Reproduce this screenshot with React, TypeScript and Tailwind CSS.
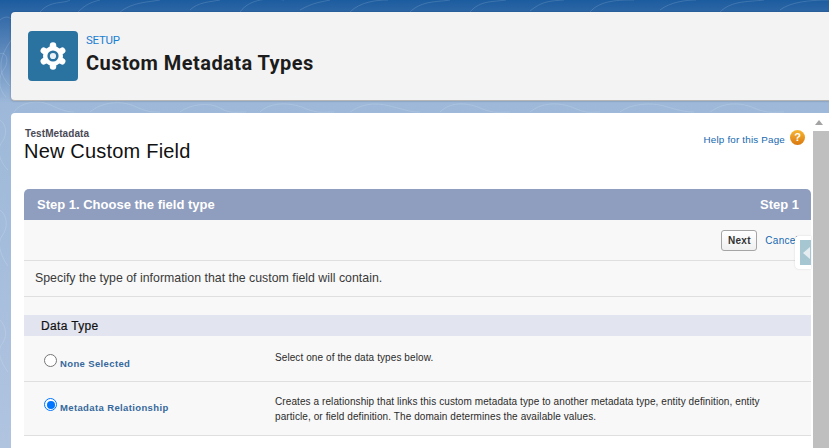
const font = { fontFamily: '"Liberation Sans", Arial, sans-serif' };

function Contours() {
  return (
    <svg className="absolute inset-0 h-full w-full" viewBox="0 0 829 448" fill="none" stroke="#ffffff" strokeOpacity="0.14">
      <path d="M0 20c12-10 20 8 10 22s-14 30 0 44" />
      <path d="M-2 55c8-6 12 6 6 14s-6 20 2 28" />
      <path d="M40 12c10-12 24-8 30-12M78 12c8-8 14-10 22-12M120 12c12-10 30-10 40-12M190 10c8-8 20-8 30-10" />
      <path d="M240 12c10-14 30-14 44-12M300 10c14-8 22-8 30-10M350 12c10-10 26-12 38-12M410 12c12-12 30-10 40-12" />
      <path d="M470 12c10-12 24-10 36-12M530 11c12-10 20-10 34-11M590 12c10-12 30-12 44-12M660 10c10-8 26-10 36-10M720 12c12-12 30-10 44-12M780 10c10-8 30-10 49-10" />
      <path d="M14 112c6-10 24-12 34-8s16 8 26 8M90 112c12-10 30-12 44-6s16 6 26 6M180 112c10-8 30-10 40-4s16 4 26 4" />
      <path d="M260 112c10-10 30-10 44-4s20 4 30 4M350 112c12-8 24-10 40-6s20 6 30 6M440 112c10-10 26-10 40-4s20 4 30 4" />
      <path d="M530 112c12-10 30-10 44-4s16 4 26 4M620 112c10-8 30-10 44-6s20 6 30 6M710 112c14-10 30-10 44-4s20 4 30 4" />
      <path d="M0 120c6 4 8 14 2 22s-2 20 6 28M0 210c8 6 8 18 2 26s0 22 6 30M0 320c6 6 8 16 2 24s0 20 6 28" />
    </svg>
  );
}

function GearIcon() {
  return (
    <svg width="30" height="30" viewBox="-15 -15 30 30">
      <circle r="10" fill="#fff" />
      {[90, 30, -30].map((a) => (
        <g key={a} transform={`rotate(${a})`}>
          <line x1="-10.6" x2="10.6" y1="0" y2="0" stroke="#fff" strokeWidth="6.5" strokeLinecap="round" />
        </g>
      ))}
      <circle r="5.6" fill="#2a729f" />
      <circle r="3.1" fill="#e9f1f6" />
    </svg>
  );
}

function TypeRow({ label, checked, children }: { label: string; checked?: boolean; children: React.ReactNode }) {
  return (
    <div className="flex border-b border-[#dfdfdf]">
      <div className={checked ? "flex w-[251px] shrink-0 items-start pl-[20px] pt-[15px]" : "flex w-[251px] shrink-0 items-start pl-[20px] pt-[17px]"}>
        <span
          className={
            checked
              ? "mt-[1px] h-[13px] w-[13px] rounded-full border border-[#0075ff] bg-white p-[1.5px]"
              : "mt-[1px] h-[13px] w-[13px] rounded-full border border-[#767676] bg-white"
          }
        >
          {checked && <span className="block h-full w-full rounded-full bg-[#0075ff]" />}
        </span>
        <span className="ml-[3px] mt-[3.5px] text-[9.5px] font-bold leading-[13px] text-[#36689c] tracking-[0.37px]">{label}</span>
      </div>
      <div className="text-[10px] leading-[15px] text-[#2b2b2b] tracking-[0.09px]">{children}</div>
    </div>
  );
}

export default function App() {
  return (
    <div
      className="relative flex h-[448px] w-[829px] flex-col overflow-hidden bg-gradient-to-b from-[#1b5c9f] via-[#9db8d9] via-[23%] to-[#b0c4e0] pl-[11px] pt-[12px]"
      style={font}
    >
      <Contours />

      {/* Setup header */}
      <div className="relative flex h-[89px] shrink-0 items-center rounded-l-[4px] border-b border-[#b5b5b5] bg-[#f3f3f3] pb-[1px] pl-[17px] shadow-[0_0_2px_rgba(0,0,0,0.3)]">
        <div className="flex h-[50px] w-[50px] items-center justify-center rounded-[4px] bg-[#2a729f]">
          <GearIcon />
        </div>
        <div className="mb-[4px] ml-[8px]">
          <div className="text-[11.5px] leading-[14px] text-[#1b7ed0] [font-family:Roboto,sans-serif] tracking-[-0.25px]">SETUP</div>
          <div className="mt-[4px] text-[20px] font-bold leading-[24px] text-[#1c1c1c] [font-family:Roboto,sans-serif] tracking-[0.45px]">Custom Metadata Types</div>
        </div>
      </div>

      {/* Page body */}
      <div className="relative mt-[12px] flex min-h-0 flex-1 rounded-tl-[4px] bg-white">
        <div className="min-w-0 flex-1 pl-[13px]">
          <div className="flex h-[76px] justify-between">
            <div className="pt-[15px]">
              <div className="ml-[1px] text-[10px] font-bold leading-[11px] text-[#4a4a56] tracking-[0.08px]">TestMetadata</div>
              <div className="mt-[1px] text-[20px] leading-[23px] text-[#111] tracking-[0.2px]">New Custom Field</div>
            </div>
            <div className="flex items-start pr-[6px] pt-[17px]">
              <a className="mt-[4px] text-[9.8px] leading-[12px] text-[#1468b0] tracking-[0.2px]">Help for this Page</a>
              <span className="ml-[5px] flex h-[15px] w-[15px] items-center justify-center rounded-full bg-gradient-to-b from-[#f7b733] to-[#d9780c] text-[11px] font-bold leading-none text-white">?</span>
            </div>
          </div>

          <div className="overflow-hidden rounded-t-[5px] bg-[#f8f8f8]">
            <div className="flex h-[31px] items-center justify-between bg-[#8f9dbe] pl-[13px] pr-[12px] text-[13px] font-bold text-white">
              <span>Step 1. Choose the field type</span>
              <span>Step 1</span>
            </div>

            <div className="flex h-[41px] items-center justify-end border-b border-[#dfdfdf] pr-[13px] pt-[1px]">
              <button className="h-[21px] w-[36px] rounded-[3px] border border-[#a5a5a5] bg-gradient-to-b from-white to-[#f0f0f0] text-[10px] font-bold text-[#333] tracking-[0.3px]">Next</button>
              <a className="ml-[8px] text-[10px] text-[#1468b0] tracking-[0.25px]">Cancel</a>
            </div>

            <div className="flex h-[36px] items-center border-b border-[#dfdfdf] pl-[11px] text-[12.35px] text-[#3a3a3a]">
              Specify the type of information that the custom field will contain.
            </div>

            <div className="h-[18px]" />

            <div className="flex h-[21px] items-center bg-[#e2e5ef] pl-[17px] text-[12px] text-[#111] tracking-[0.35px] [-webkit-text-stroke:0.2px_#111]">
              Data Type
            </div>

            <TypeRow label="None Selected">
              <p className="h-[45px] pt-[14px]">Select one of the data types below.</p>
            </TypeRow>
            <TypeRow label="Metadata Relationship" checked>
              <p className="h-[53px] pt-[12px]">
                Creates a relationship that links this custom metadata type to another metadata type, entity definition, entity
                <br />
                particle, or field definition. The domain determines the available values.
              </p>
            </TypeRow>
          </div>
        </div>

        {/* Scrollbar */}
        <div className="flex w-[18px] shrink-0 flex-col items-start bg-white pt-[7px]">
          <span className="ml-[4px] h-0 w-0 border-x-[4px] border-b-[5px] border-x-transparent border-b-[#a3a3a3]" />
          <div className="ml-[2px] mt-[6px] w-[16px] flex-1 bg-[#bfbfbf]" />
        </div>

        {/* Collapsed side handle */}
        <div className="absolute right-[18px] top-[123px] flex h-[33px] w-[16px] items-center justify-end rounded-l-[4px] bg-white shadow-[0_0_2px_rgba(0,0,0,0.15)]">
          <div className="flex h-[25px] w-[11px] items-center bg-[#a6c7d2]">
            <span className="ml-[3px] h-0 w-0 border-y-[6px] border-r-[7px] border-y-transparent border-r-[#e6edf0]" />
          </div>
        </div>
      </div>
    </div>
  );
}
